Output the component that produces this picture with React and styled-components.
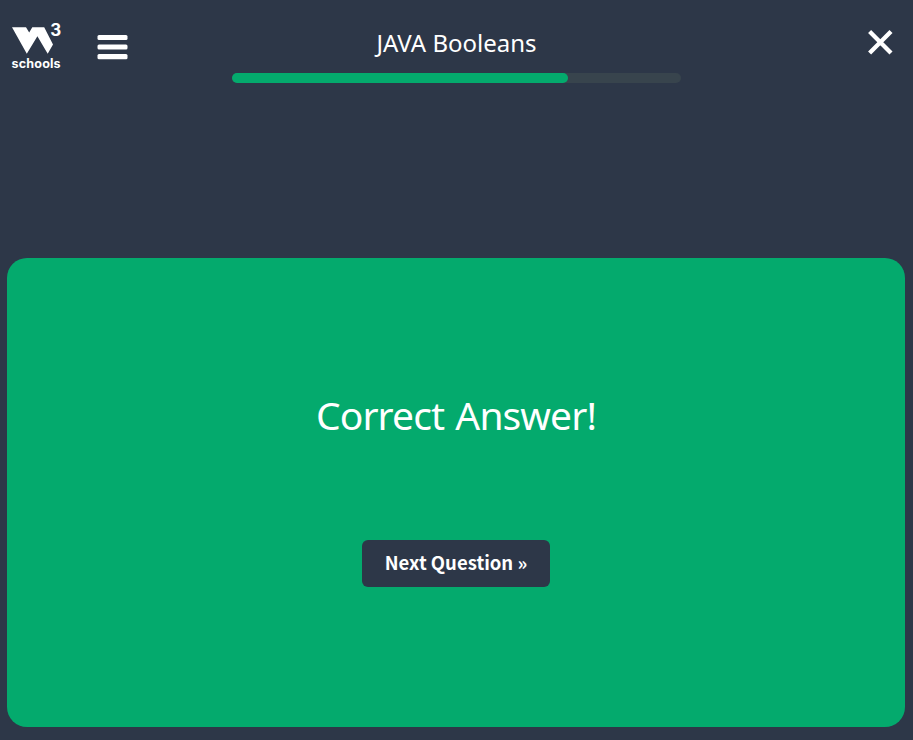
import React from "react";
import styled, { createGlobalStyle } from "styled-components";

const GlobalStyle = createGlobalStyle`
  * { box-sizing: border-box; }
  body { margin: 0; background: #2d3748; }
`;

const Page = styled.div`
  width: 100%;
  height: 740px;
  display: flex;
  flex-direction: column;
  background: #2d3748;
  color: #fff;
  font-family: "Noto Sans", "Open Sans", sans-serif;
  overflow: hidden;
`;

const Header = styled.header`
  height: 258px;
  flex: none;
  display: grid;
  grid-template-columns: 232px 449px 232px;
  align-items: start;
`;

const Brand = styled.div`
  display: flex;
  padding: 20px 0 0 10px;
  gap: 35px;
`;

const Logo = styled.svg`
  width: 52px;
  height: 52px;
  display: block;
  fill: #fff;
`;

const LogoText = styled.text`
  font-family: Inter, sans-serif;
  font-weight: ${(p) => p.$weight};
  font-size: ${(p) => p.$size}px;
`;

const MenuButton = styled.button`
  border: 0;
  padding: 14px 0 0;
  background: none;
  height: 42px;
  svg { display: block; fill: #fff; }
`;

const Progress = styled.div`
  display: flex;
  flex-direction: column;
  align-items: center;
  padding-top: 25px;
`;

const Title = styled.h1`
  margin: 0;
  height: 48px;
  font-size: 24px;
  line-height: 36px;
  font-weight: 400;
  white-space: nowrap;
`;

const Track = styled.div`
  width: 100%;
  height: 10px;
  border-radius: 5px;
  background: #38444d;
`;

const Fill = styled.div`
  width: 336px;
  height: 10px;
  border-radius: 5px;
  background: #04aa6d;
`;

const CloseButton = styled.button`
  justify-self: end;
  border: 0;
  background: none;
  padding: 0;
  margin: 28px 19px 0 0;
  svg { display: block; }
`;

const Result = styled.main`
  height: 469px;
  width: 898px;
  margin-left: 7px;
  border-radius: 20px;
  background: #04aa6d;
  display: flex;
  flex-direction: column;
  align-items: center;
`;

const Message = styled.h2`
  margin: 127px 0 0;
  height: 155px;
  font-size: 39px;
  line-height: 60px;
  font-weight: 400;
  letter-spacing: -0.9px;
  word-spacing: 2px;
  white-space: nowrap;
`;

const NextButton = styled.button`
  width: 188px;
  height: 47px;
  border: 0;
  border-radius: 6px;
  padding: 0 0 3px;
  background: #2d3748;
  color: #fff;
  font-family: "Noto Sans CJK SC", sans-serif;
  font-weight: 700;
  font-size: 18.5px;
  line-height: 26px;
  white-space: nowrap;
`;

export default function App() {
  return (
    <>
      <GlobalStyle />
      <Page>
        <Header>
          <Brand>
            <Logo viewBox="10 20 52 52" aria-label="W3Schools">
              <path d="M12 27.2H26L29.2 32.6L32.3 27.2H44.2L53 44.4L47.7 53.8L37.4 36.2L26.8 53.8Z" />
              <LogoText x="50.2" y="35.9" $size="17" $weight="700">3</LogoText>
              <LogoText x="11.6" y="67.8" textLength="49" $size="12.6" $weight="700">schools</LogoText>
            </Logo>
            <MenuButton aria-label="Menu">
              <svg width="32" height="28" viewBox="0 0 32 28">
                <rect x="0.5" y="1" width="30" height="5" rx="1.5" />
                <rect x="0.5" y="10.4" width="30" height="5.2" rx="1.5" />
                <rect x="0.5" y="20" width="30" height="5.2" rx="1.5" />
              </svg>
            </MenuButton>
          </Brand>
          <Progress>
            <Title>JAVA Booleans</Title>
            <Track>
              <Fill />
            </Track>
          </Progress>
          <CloseButton aria-label="Close">
            <svg width="28" height="28" viewBox="0 0 28 28">
              <path d="M3.6 3.6L25 25M25 3.6L3.6 25" stroke="#fff" strokeWidth="4.3" />
            </svg>
          </CloseButton>
        </Header>
        <Result>
          <Message>Correct Answer!</Message>
          <NextButton>Next Question »</NextButton>
        </Result>
      </Page>
    </>
  );
}
